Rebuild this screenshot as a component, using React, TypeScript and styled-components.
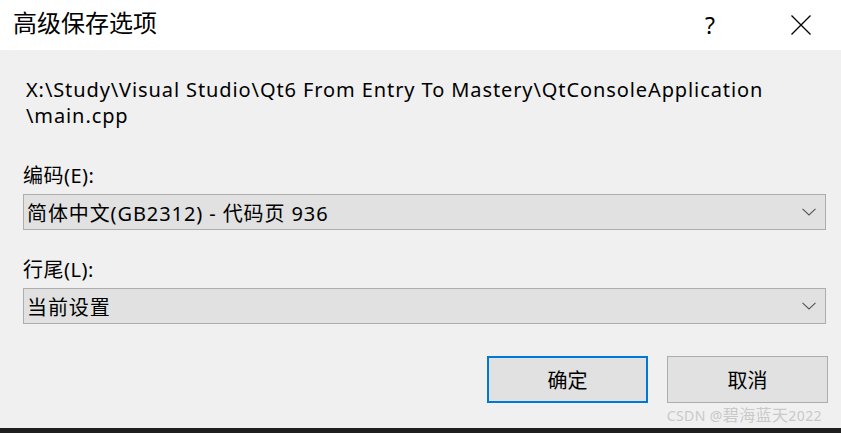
import React from "react";
import styled, { createGlobalStyle } from "styled-components";

const Global = createGlobalStyle`
  html, body { margin: 0; padding: 0; background: #f0f0f0; }
  #root { width: 841px; height: 433px; }
`;

const FONT = `"Noto Sans", "Noto Sans CJK SC", sans-serif`;

const Window = styled.div`
  position: relative;
  width: 841px;
  height: 433px;
  background: #f0f0f0;
  display: flex;
  flex-direction: column;
  font-family: ${FONT};
  color: #000;
  overflow: hidden;
`;

const TitleBar = styled.div`
  height: 50px;
  flex: 0 0 50px;
  background: #ffffff;
  display: flex;
  align-items: center;
  padding-left: 13px;
`;

const Title = styled.div`
  font-size: 24px;
  flex: 1;
  line-height: 30px;
  margin-top: -4px;
`;

const TitleButton = styled.div<{ $w: number; $mr: number }>`
  width: ${(p) => p.$w}px;
  margin-right: ${(p) => p.$mr}px;
  height: 50px;
  display: flex;
  align-items: center;
  justify-content: center;
  font-size: 23px;
  color: #000;
`;

const Content = styled.div`
  flex: 1;
  display: flex;
  flex-direction: column;
  padding: 0 15px 0 23px;
`;

const PathText = styled.div`
  font-size: 20px;
  line-height: 26px;
  letter-spacing: 0.9px;
  margin: 27px 0 0 3px;
  word-break: break-all;
`;

const Label = styled.div<{ $top: number }>`
  font-size: 20px;
  line-height: 26px;
  letter-spacing: 0.5px;
  margin-top: ${(p) => p.$top}px;
  height: 26px;
`;

const Combo = styled.div`
  box-sizing: border-box;
  height: 36px;
  margin-top: 5px;
  border: 1px solid #adadad;
  background: #e1e1e1;
  display: flex;
  align-items: center;
  padding: 0 9px 0 3px;
  font-size: 20px;
  letter-spacing: 0.9px;
`;

const ComboText = styled.span`
  flex: 1;
`;

const ButtonRow = styled.div`
  display: flex;
  justify-content: flex-end;
  gap: 19px;
  margin-top: 32px;
  margin-right: -2px;
`;

const DialogButton = styled.div<{ $primary?: boolean }>`
  box-sizing: border-box;
  width: 161px;
  height: 47px;
  background: #e1e1e1;
  border: ${(p) => (p.$primary ? "2px solid #0078d7" : "1px solid #adadad")};
  display: flex;
  align-items: center;
  justify-content: center;
  font-size: 20px;
`;

const BottomStrip = styled.div`
  position: absolute;
  left: 0;
  right: 0;
  bottom: 0;
  height: 5px;
  background: #1f1f1f;
`;

const Watermark = styled.div`
  position: absolute;
  right: 19px;
  bottom: 7px;
  font-size: 14px;
  color: #c9c9c9;
  font-family: ${FONT};
  letter-spacing: 0.4px;
`;

const WatermarkCjk = styled.span`
  font-size: 16px;
`;

const Chevron = () => (
  <svg width="14" height="8" viewBox="0 0 14 8">
    <path d="M0.5 0.8 L7 7 L13.5 0.8" fill="none" stroke="#555" strokeWidth="1.1" />
  </svg>
);

const CloseIcon = () => (
  <svg width="20" height="20" viewBox="0 0 20 20">
    <path d="M0.5 0.5 L19.5 19.5 M19.5 0.5 L0.5 19.5" stroke="#000" strokeWidth="1.3" />
  </svg>
);

export default function App() {
  return (
    <>
      <Global />
      <Window>
        <TitleBar>
          <Title>高级保存选项</Title>
          <TitleButton $w={40} $mr={47}>?</TitleButton>
          <TitleButton $w={48} $mr={16}>
            <CloseIcon />
          </TitleButton>
        </TitleBar>
        <Content>
          <PathText>
            X:\Study\Visual Studio\Qt6 From Entry To Mastery\QtConsoleApplication
            <br />
            \main.cpp
          </PathText>
          <Label $top={34}>编码(E):</Label>
          <Combo>
            <ComboText>简体中文(GB2312) - 代码页 936</ComboText>
            <Chevron />
          </Combo>
          <Label $top={27}>行尾(L):</Label>
          <Combo>
            <ComboText>当前设置</ComboText>
            <Chevron />
          </Combo>
          <ButtonRow>
            <DialogButton $primary>确定</DialogButton>
            <DialogButton>取消</DialogButton>
          </ButtonRow>
        </Content>
        <Watermark>
          CSDN @<WatermarkCjk>碧海蓝天</WatermarkCjk>2022
        </Watermark>
        <BottomStrip />
      </Window>
    </>
  );
}
